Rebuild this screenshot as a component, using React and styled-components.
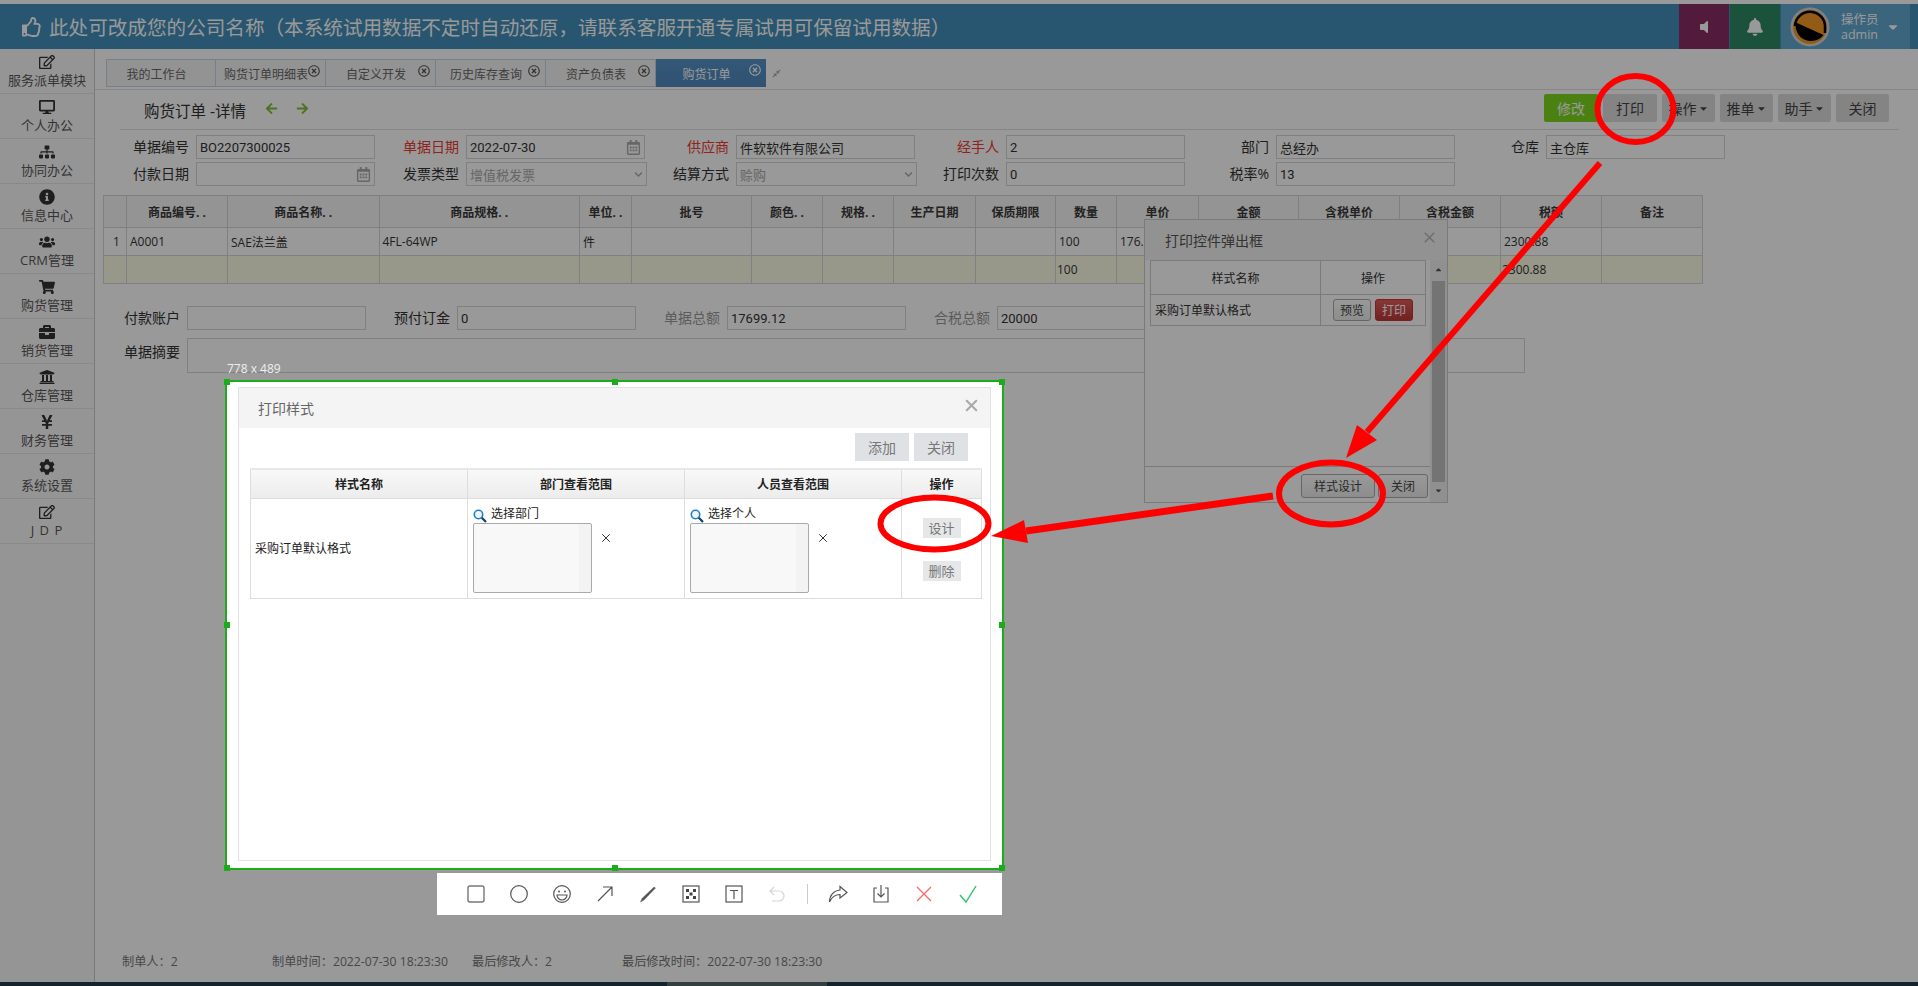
import React from 'react';
import styled, { createGlobalStyle } from 'styled-components';
import { X } from 'lucide-react';
import {
  FaRegThumbsUp, FaVolumeOff, FaBell, FaCaretDown, FaRegEdit, FaDesktop, FaSitemap, FaInfoCircle,
  FaUsers, FaShoppingCart, FaBriefcase, FaUniversity, FaYenSign, FaCog, FaRegTimesCircle,
  FaCompressAlt, FaArrowLeft, FaArrowRight, FaRegCalendarAlt, FaChevronDown, FaCaretUp,
} from 'react-icons/fa';

const Global = createGlobalStyle`
  html, body { margin: 0; padding: 0; background: #fff; }
  body { font-family: "Open Sans", "Noto Sans CJK SC", sans-serif; font-size: 12px; color: #333; }
  * { box-sizing: border-box; }
`;

const Screen = styled.div`
  position: relative;
  width: 1918px;
  height: 986px;
  overflow: hidden;
  background: #fff;
  display: flex;
  flex-direction: column;
`;
const TopStrip = styled.div`height: 4px; background: #fff; flex: none;`;
const Header = styled.header`
  height: 45px;
  flex: none;
  background: #438eb9;
  display: flex;
  color: #fff;
`;
const Brand = styled.div`
  flex: 1;
  display: flex;
  align-items: center;
  padding-left: 22px;
  font-size: 19.6px;
  gap: 7px;
  white-space: nowrap;
`;
const HeadBtn = styled.div`
  width: ${p => p.$w}px;
  margin-right: 1px;
  background: ${p => p.$bg};
  display: flex;
  align-items: center;
  justify-content: center;
  font-size: ${p => p.$size}px;
`;
const UserBox = styled.div`
  width: 129px;
  background: #62a8d1;
  display: flex;
  align-items: center;
  padding-left: 9px;
  margin-right: 8px;
  svg:last-child { margin-left: -1px; }
`;
const UserText = styled.div`
  margin-left: 11px;
  font-size: 12.5px;
  line-height: 15px;
  width: 46px;
  text-align: left;
`;
const Layout = styled.div`flex: 1; display: flex; min-height: 0;`;
const Sidebar = styled.nav`
  width: 95px;
  flex: none;
  background: #f8f8f8;
  border-right: 1px solid #ccc;
`;
const NavItem = styled.div`
  height: 45px;
  border-bottom: 1px solid #e5e5e5;
  display: flex;
  flex-direction: column;
  align-items: center;
  padding-top: 5px;
  color: #585858;
  font-size: 13px;
  line-height: 18px;
  letter-spacing: ${p => (p.$wide ? '1px' : '0')};
  svg { color: #333; font-size: 16px; margin-bottom: 1px; }
`;
const Main = styled.main`flex: 1; display: flex; flex-direction: column; min-width: 0;`;
const TabBar = styled.div`
  height: 41px;
  flex: none;
  padding: 10px 0 0 11px;
  border-bottom: 1px solid #e0e0e0;
  display: flex;
  align-items: flex-start;
`;
const Tab = styled.div`
  position: relative;
  width: 110px;
  height: 28px;
  display: flex;
  align-items: center;
  justify-content: center;
  padding: 2px 9px 0 0;
  font-size: 12px;
  white-space: nowrap;
  color: ${p => (p.$active ? '#fff' : '#666')};
  background: ${p => (p.$active ? 'linear-gradient(#5593c8, #5288c0)' : '#f6f6f6')};
  border: 1px solid #c5d5e8;
  border-left-width: ${p => (p.$first ? '1px' : '0')};
  ${p => p.$active && 'border: none;'}
`;
const TabClose = styled.span`
  position: absolute;
  right: 5px;
  top: 5px;
  font-size: 12px;
  line-height: 12px;
  color: ${p => (p.$active ? '#fff' : '#555')};
`;
const Pin = styled.span`
  margin: 10px 0 0 6px;
  font-size: 9px;
  line-height: 9px;
  color: #aaa;
`;
const TitleBar = styled.div`
  height: 40px;
  flex: none;
  margin: 0 19px 0 25px;
  padding: 4px 10px 0 24px;
  border-bottom: 1px solid #e0e0e0;
  display: flex;
  align-items: flex-start;
`;
const Title = styled.div`
  font-size: 15.5px;
  line-height: 28px;
  padding-top: 3px;
  color: #333;
  flex: 1;
  display: flex;
  align-items: center;
`;
const NavArrow = styled.span`
  color: #7fbf3a;
  font-size: 13px;
  line-height: 13px;
  margin-left: ${p => p.$ml}px;
  margin-bottom: 4px;
`;
const Actions = styled.div`display: flex; gap: 5px;`;
const ActionBtn = styled.div`
  height: 28px;
  width: ${p => p.$w}px;
  border-radius: 2px;
  background: ${p => (p.$green ? '#7dd820' : '#dcdcdc')};
  color: ${p => (p.$green ? '#fff' : '#444')};
  display: flex;
  align-items: center;
  justify-content: center;
  font-size: 14px;
  svg { font-size: 11px; margin-left: 1px; }
`;
const FormGrid = styled.div`
  margin: ${p => p.$top}px 0 0 ${p => p.$left}px;
  display: grid;
  grid-template-columns: repeat(6, 270px);
  row-gap: ${p => p.$gap}px;
`;
const Field = styled.div`
  display: grid;
  grid-template-columns: 63px ${p => p.$inputW || 179}px;
  column-gap: 7px;
  align-items: ${p => (p.$top ? 'start' : 'center')};
  grid-column: span ${p => p.$span || 1};
`;
const labelColor = { red: '#f03b2e', muted: '#999', normal: '#333' };
const Label = styled.label`
  text-align: right;
  font-size: 14px;
  line-height: ${p => p.$lh || 20}px;
  white-space: nowrap;
  color: ${p => labelColor[p.$tone || 'normal']};
`;
const TextBox = styled.div`
  height: ${p => p.$h || 24}px;
  border: 1px solid #d5d5d5;
  background: #fff;
  display: flex;
  align-items: center;
  justify-content: space-between;
  padding: 0 3px 0 3px;
  font-family: Roboto, "Noto Sans CJK SC", sans-serif;
  font-size: 13px;
  color: ${p => (p.$muted ? '#aaa' : '#333')};
  svg { color: #aaa; font-size: ${p => (p.$muted ? 9 : 15)}px; }
`;
const DataTable = styled.table`
  width: 1599px;
  margin: 9px 0 0 8px;
  border-collapse: collapse;
  table-layout: fixed;
  flex: none;
`;
const Th = styled.th`
  height: 32px;
  border: 1px solid #d5d5d5;
  background: #f7f7f7;
  font-size: 12px;
  font-weight: 700;
  color: #393939;
  padding: 0;
  white-space: nowrap;
`;
const Td = styled.td`
  height: 28px;
  border: 1px solid #d5d5d5;
  background: ${p => (p.$total ? '#fdfde6' : '#fff')};
  padding: 0 0 0 ${p => (p.$total ? 1 : 3)}px;
  font-size: 12px;
  text-align: ${p => (p.$center ? 'center' : 'left')};
  white-space: nowrap;
  overflow: hidden;
`;
const Col = styled.col`width: ${p => p.$w}px;`;
const Footer = styled.div`
  margin: auto 0 0 27px;
  padding-bottom: 12px;
  display: flex;
  font-size: 12.2px;
  line-height: 16px;
  color: #777;
`;
const FootItem = styled.span`width: ${p => p.$w}px;`;
const BottomStrip = styled.div`
  height: 4px;
  flex: none;
  background: linear-gradient(90deg, #223c4c 667px, #556a6a 667px, #556a6a 827px, #223c4c 827px);
`;

// 打印控件弹出框 (behind the dim layer)
const PrintPopup = styled.div`
  position: absolute;
  left: 1144px;
  top: 219px;
  width: 304px;
  height: 284px;
  background: #fff;
  border: 1px solid #ccc;
  display: grid;
  grid-template-columns: 1fr 17px;
  grid-template-rows: 40px 1fr;
`;
const PopupLeft = styled.div`display: flex; flex-direction: column;`;
const PopupHead = styled.div`
  grid-column: 1 / -1;
  background: #f3f3f3;
  display: flex;
  align-items: center;
  justify-content: space-between;
  padding: 0 9px 0 20px;
  font-size: 14px;
  color: #555;
  svg { color: #bbb; margin-bottom: 6px; }
`;
const PopupBody = styled.div`flex: 1; padding-left: 5px;`;
const PopupFoot = styled.div`
  height: 36px;
  flex: none;
  border-top: 1px solid #ccc;
  display: flex;
  justify-content: flex-end;
  padding: 7px 2px 0 0;
  gap: 3px;
`;
const SmallTable = styled.table`
  width: 275px;
  border-collapse: collapse;
  table-layout: fixed;
  th, td { border: 1px solid #ccc; font-size: 12px; padding: 0; color: #333; }
  th { height: 34px; font-weight: 400; text-align: center; }
  td { height: 31px; padding-left: 4px; }
`;
const PopBtn = styled.span`
  display: inline-flex;
  width: ${p => p.$w}px;
  height: ${p => p.$h}px;
  align-items: center;
  justify-content: center;
  border: 1px solid ${p => (p.$red ? '#c33' : '#aaa')};
  border-radius: 3px;
  color: ${p => (p.$red ? '#fff' : '#444')};
  background: ${p => (p.$red ? 'linear-gradient(#e35a5a, #bf3838)' : 'linear-gradient(#fff, #ececec)')};
  margin-left: ${p => p.$ml || 0}px;
  font-size: 12px;
`;
const OpsRow = styled.div`display: flex; justify-content: center; padding-right: 4px;`;
const ScrollTrack = styled.div`
  background: #f1f1f1;
  display: flex;
  flex-direction: column;
  align-items: center;
  padding-top: 5px;
  color: #555;
  font-size: 9px;
`;
const ScrollThumb = styled.div`
  width: 13px;
  height: 201px;
  margin: 7px 0 4px;
  background: #c1c1c1;
`;

const Dim = styled.div`position: absolute; inset: 0; background: rgba(0, 0, 0, .4);`;

// bright area of the screenshot tool
const Selection = styled.section`
  position: absolute;
  left: 225px;
  top: 380px;
  width: 779px;
  height: 490px;
  border: 2px solid #1aad19;
  background: #fff;
  padding: 5px 11px 7px;
`;
const SizeTag = styled.span`
  position: absolute;
  left: 0;
  top: -21px;
  color: #eee;
  font-size: 12px;
  line-height: 16px;
`;
const Handle = styled.i`
  position: absolute;
  left: ${p => p.$x}%;
  top: ${p => p.$y}%;
  width: 6px;
  height: 6px;
  margin: -3px 0 0 -3px;
  background: #1aad19;
`;
const Modal = styled.div`
  height: 100%;
  border: 1px solid #e0e3e6;
  display: flex;
  flex-direction: column;
`;
const ModalHead = styled.div`
  position: relative;
  height: 40px;
  flex: none;
  background: #f4f4f4;
  display: flex;
  align-items: center;
  padding-left: 19px;
  font-size: 14px;
  color: #666;
`;
const ModalClose = styled.span`
  position: absolute;
  right: 9px;
  top: 8px;
  color: #aaa;
  line-height: 0;
`;
const ModalBody = styled.div`padding: 5px 9px 0 11px;`;
const ModalBtns = styled.div`
  display: flex;
  justify-content: flex-end;
  gap: 5px;
  padding-right: 13px;
  margin-bottom: 7px;
`;
const GrayBtn = styled.span`
  display: inline-flex;
  width: 54px;
  height: 28px;
  align-items: center;
  justify-content: center;
  background: #dfe2e5;
  color: #777;
  font-size: 14px;
`;
const StyleTable = styled.table`
  width: 731px;
  border-collapse: collapse;
  table-layout: fixed;
  border-top: 2px solid #e8e8e8;
  th, td { border: 1px solid #ddd; padding: 0; font-size: 12px; color: #222; }
  th { height: 29px; font-weight: 700; background: linear-gradient(#f8f8f8, #ececec); text-align: center; }
  td { height: 100px; vertical-align: top; }
`;
const NameCell = styled.td`
  && { vertical-align: middle; padding-left: 4px; }
`;
const Scope = styled.div`padding: 8px 0 0 5px;`;
const PickLine = styled.div`
  display: flex;
  height: 16px;
  align-items: flex-start;
  gap: 4px;
  font-size: 12px;
  line-height: 14px;
  svg { margin-top: 2px; }
`;
const ScopeRow = styled.div`display: flex; align-items: flex-start;`;
const ScopeBox = styled.div`
  width: 119px;
  height: 70px;
  border: 1px solid #aaa;
  border-radius: 2px;
  background: linear-gradient(to left, #f3f3f3 12px, #f8f8f8 12px);
`;
const Remove = styled.span`
  margin: 8px 0 0 7px;
  line-height: 0;
  color: #333;
`;
const OpCell = styled.div`
  display: flex;
  flex-direction: column;
  align-items: center;
  gap: 23px;
  padding-top: 19px;
`;
const OpBtn = styled.span`
  display: inline-flex;
  width: 38px;
  height: 20px;
  align-items: center;
  justify-content: center;
  background: #e5e7e9;
  color: #777;
  font-size: 13px;
`;
const Tools = styled.div`
  position: absolute;
  left: 437px;
  top: 873px;
  width: 565px;
  height: 42px;
  background: #fff;
  display: flex;
  align-items: center;
  padding-left: 17px;
`;
const ToolSlot = styled.span`
  width: ${p => p.$w || 43.1}px;
  height: 22px;
  flex: none;
  display: flex;
  align-items: center;
  justify-content: center;
`;
const ToolSep = styled.span`width: 1px; height: 20px; background: #ccc;`;
const Marks = styled.svg`position: absolute; left: 0; top: 0; pointer-events: none;`;

const Avatar = () => (
  <svg width="40" height="40" viewBox="0 0 40 40">
    <circle cx="20" cy="20" r="19.5" fill="#d8d8d8" />
    <circle cx="20" cy="20" r="17" fill="#f59a24" />
    <path d="M5 19A15 15 0 0 1 35 20.5" fill="none" stroke="#000" strokeWidth="2.5" />
    <path d="M6 15.5 L33.5 28 A15.5 15.5 0 0 1 6 15.5Z" fill="#000" />
    <path d="M35 20 L35 26" stroke="#000" strokeWidth="2.5" />
  </svg>
);

const Lens = () => (
  <svg width="14" height="14" viewBox="0 0 14 14">
    <circle cx="5.5" cy="5.5" r="4.2" fill="#eef6fb" stroke="#1f7fc0" strokeWidth="1.6" />
    <path d="M8.8 8.8 L13 13" stroke="#123f63" strokeWidth="2.2" />
  </svg>
);

const Tool = ({ children, stroke = '#555', width = 1.2 }) => (
  <ToolSlot>
    <svg width="20" height="20" viewBox="0 0 20 20" fill="none" stroke={stroke} strokeWidth={width}>{children}</svg>
  </ToolSlot>
);

const navItems = [
  [FaRegEdit, '服务派单模块'], [FaDesktop, '个人办公'], [FaSitemap, '协同办公'], [FaInfoCircle, '信息中心'],
  [FaUsers, 'CRM管理'], [FaShoppingCart, '购货管理'], [FaBriefcase, '销货管理'], [FaUniversity, '仓库管理'],
  [FaYenSign, '财务管理'], [FaCog, '系统设置'], [FaRegEdit, 'J D P', true],
];
const tabs = ['我的工作台', '购货订单明细表', '自定义开发', '历史库存查询', '资产负债表', '购货订单'];
const colWidths = [23, 101, 151.5, 200.5, 52, 120, 71, 71, 82, 80, 61, 82, 100, 101, 101, 101, 101];
const heads = ['', '商品编号. .', '商品名称. .', '商品规格. .', '单位. .', '批号', '颜色. .', '规格. .', '生产日期', '保质期限', '数量', '单价', '金额', '含税单价', '含税金额', '税额', '备注'];
const row1 = ['1', 'A0001', 'SAE法兰盖', '4FL-64WP', '件', '', '', '', '', '', '100', '176.', '', '', '', '2300.88', ''];
const row2 = ['', '', '', '', '', '', '', '', '', '', '100', '', '', '', '', '2300.88', ''];
const handles = [[0, 0], [50, 0], [100, 0], [0, 50], [100, 50], [0, 100], [50, 100], [100, 100]];

const App = () => (
  <Screen>
    <Global />
    <TopStrip />
    <Header>
      <Brand>
        <FaRegThumbsUp size={20} />
        此处可改成您的公司名称（本系统试用数据不定时自动还原，请联系客服开通专属试用可保留试用数据）
      </Brand>
      <HeadBtn $w={50} $bg="#892e65" $size={16}><FaVolumeOff /></HeadBtn>
      <HeadBtn $w={50} $bg="#2e8965" $size={18}><FaBell /></HeadBtn>
      <UserBox>
        <Avatar />
        <UserText>操作员<br />admin</UserText>
        <FaCaretDown size={14} />
      </UserBox>
    </Header>
    <Layout>
      <Sidebar>
        {navItems.map(([Icon, text, wide]) => (
          <NavItem key={text} $wide={wide}><Icon />{text}</NavItem>
        ))}
      </Sidebar>
      <Main>
        <TabBar>
          {tabs.map((t, i) => (
            <Tab key={t} $first={i === 0} $active={i === 5}>
              {t}
              {i > 0 && <TabClose $active={i === 5}><FaRegTimesCircle /></TabClose>}
            </Tab>
          ))}
          <Pin><FaCompressAlt /></Pin>
        </TabBar>
        <TitleBar>
          <Title>
            购货订单 -详情
            <NavArrow $ml={19}><FaArrowLeft /></NavArrow>
            <NavArrow $ml={18}><FaArrowRight /></NavArrow>
          </Title>
          <Actions>
            <ActionBtn $w={54} $green>修改</ActionBtn>
            <ActionBtn $w={54}>打印</ActionBtn>
            <ActionBtn $w={53}>操作<FaCaretDown /></ActionBtn>
            <ActionBtn $w={53}>推单<FaCaretDown /></ActionBtn>
            <ActionBtn $w={53}>助手<FaCaretDown /></ActionBtn>
            <ActionBtn $w={53}>关闭</ActionBtn>
          </Actions>
        </TitleBar>
        <FormGrid $top={5} $left={31} $gap={3}>
          <Field><Label>单据编号</Label><TextBox>BO2207300025</TextBox></Field>
          <Field><Label $tone="red">单据日期</Label><TextBox>2022-07-30<FaRegCalendarAlt /></TextBox></Field>
          <Field><Label $tone="red">供应商</Label><TextBox>件软软件有限公司</TextBox></Field>
          <Field><Label $tone="red">经手人</Label><TextBox>2</TextBox></Field>
          <Field><Label>部门</Label><TextBox>总经办</TextBox></Field>
          <Field><Label>仓库</Label><TextBox>主仓库</TextBox></Field>
          <Field><Label>付款日期</Label><TextBox><span /><FaRegCalendarAlt /></TextBox></Field>
          <Field $inputW={181}><Label>发票类型</Label><TextBox $muted>增值税发票<FaChevronDown /></TextBox></Field>
          <Field $inputW={181}><Label>结算方式</Label><TextBox $muted>赊购<FaChevronDown /></TextBox></Field>
          <Field><Label>打印次数</Label><TextBox>0</TextBox></Field>
          <Field><Label>税率%</Label><TextBox>13</TextBox></Field>
        </FormGrid>
        <DataTable>
          <colgroup>{colWidths.map((w, i) => <Col key={i} $w={w} />)}</colgroup>
          <thead><tr>{heads.map((h, i) => <Th key={i}>{h}</Th>)}</tr></thead>
          <tbody>
            <tr>{row1.map((c, i) => <Td key={i} $center={i === 0}>{c}</Td>)}</tr>
            <tr>{row2.map((c, i) => <Td key={i} $total>{c}</Td>)}</tr>
          </tbody>
        </DataTable>
        <FormGrid $top={22} $left={22} $gap={8}>
          <Field><Label>付款账户</Label><TextBox /></Field>
          <Field><Label>预付订金</Label><TextBox>0</TextBox></Field>
          <Field><Label $tone="muted">单据总额</Label><TextBox>17699.12</TextBox></Field>
          <Field><Label $tone="muted">合税总额</Label><TextBox>20000</TextBox></Field>
          <Field $span={6} $inputW={1338} $top><Label $lh={28}>单据摘要</Label><TextBox $h={35} /></Field>
        </FormGrid>
        <Footer>
          <FootItem $w={150}>制单人：2</FootItem>
          <FootItem $w={200}>制单时间：2022-07-30 18:23:30</FootItem>
          <FootItem $w={150}>最后修改人：2</FootItem>
          <FootItem>最后修改时间：2022-07-30 18:23:30</FootItem>
        </Footer>
      </Main>
    </Layout>
    <BottomStrip />

    <PrintPopup>
      <PopupHead>打印控件弹出框<X size={17} strokeWidth={2.4} /></PopupHead>
      <PopupLeft>
        <PopupBody>
          <SmallTable>
            <colgroup><Col $w={170} /><Col $w={105} /></colgroup>
            <thead><tr><th>样式名称</th><th>操作</th></tr></thead>
            <tbody>
              <tr>
                <td>采购订单默认格式</td>
                <td><OpsRow><PopBtn $w={38} $h={22}>预览</PopBtn><PopBtn $w={38} $h={22} $ml={4} $red>打印</PopBtn></OpsRow></td>
              </tr>
            </tbody>
          </SmallTable>
        </PopupBody>
        <PopupFoot>
          <PopBtn $w={74} $h={24}>样式设计</PopBtn>
          <PopBtn $w={50} $h={24}>关闭</PopBtn>
        </PopupFoot>
      </PopupLeft>
      <ScrollTrack>
        <FaCaretUp />
        <ScrollThumb />
        <FaCaretDown />
      </ScrollTrack>
    </PrintPopup>

    <Dim />

    <Selection>
      <SizeTag>778 x 489</SizeTag>
      {handles.map(([x, y]) => <Handle key={`${x}-${y}`} $x={x} $y={y} />)}
      <Modal>
        <ModalHead>
          打印样式
          <ModalClose><X size={19} strokeWidth={2.6} /></ModalClose>
        </ModalHead>
        <ModalBody>
          <ModalBtns><GrayBtn>添加</GrayBtn><GrayBtn>关闭</GrayBtn></ModalBtns>
          <StyleTable>
            <colgroup><Col $w={217} /><Col $w={217} /><Col $w={217} /><Col $w={80} /></colgroup>
            <thead><tr><th>样式名称</th><th>部门查看范围</th><th>人员查看范围</th><th>操作</th></tr></thead>
            <tbody>
              <tr>
                <NameCell>采购订单默认格式</NameCell>
                <td>
                  <Scope>
                    <PickLine><Lens />选择部门</PickLine>
                    <ScopeRow><ScopeBox /><Remove><X size={14} strokeWidth={1.7} /></Remove></ScopeRow>
                  </Scope>
                </td>
                <td>
                  <Scope>
                    <PickLine><Lens />选择个人</PickLine>
                    <ScopeRow><ScopeBox /><Remove><X size={14} strokeWidth={1.7} /></Remove></ScopeRow>
                  </Scope>
                </td>
                <td><OpCell><OpBtn>设计</OpBtn><OpBtn>删除</OpBtn></OpCell></td>
              </tr>
            </tbody>
          </StyleTable>
        </ModalBody>
      </Modal>
    </Selection>

    <Tools>
      <Tool stroke="#777" width={1.4}><rect x="2" y="2" width="16" height="16" rx="2" /></Tool>
      <Tool><circle cx="10" cy="10" r="8.3" /></Tool>
      <Tool>
        <circle cx="10" cy="10" r="8.3" />
        <circle cx="7" cy="7.5" r="1" fill="#555" stroke="none" />
        <circle cx="13" cy="7.5" r="1" fill="#555" stroke="none" />
        <path d="M5 11h10a5 5 0 0 1-10 0Z" />
      </Tool>
      <Tool><path d="M3 17 L17 3 M8 3 H17 V12" /></Tool>
      <Tool width={0.4}><path d="M2.5 18 L4 14.5 L16 3 L17.5 4 L6 16 Z" fill="#555" /></Tool>
      <Tool>
        <rect x="2" y="2" width="16" height="16" />
        <path d="M5 5h3v3H5zM12 5h3v3h-3zM8.5 8.5h3v3h-3zM5 12h3v3H5zM12 12h3v3h-3z" fill="#444" stroke="none" />
      </Tool>
      <Tool><rect x="2" y="2" width="16" height="16" /><path d="M6 6.5H14M10 6.5V15" /></Tool>
      <Tool stroke="#d5d5d5"><path d="M7 3 L3 7 L7 11 M3 7 H12 A5 5 0 0 1 12 17 H5" /></Tool>
      <ToolSlot $w={18}><ToolSep /></ToolSlot>
      <Tool><path d="M12 2.5 L19 8.5 L12 14 V10.5 C7.5 10.5 4 12.5 1.5 18 C1.5 11 6 6.5 12 6 Z" /></Tool>
      <Tool><path d="M6 4 H3 V18 H17 V4 H14 M10 1 V13 M6.5 9.5 L10 13 L13.5 9.5" /></Tool>
      <Tool stroke="#f56c6c" width={1.4}><path d="M3 3 L17 17 M17 3 L3 17" /></Tool>
      <Tool stroke="#2dc26b" width={1.4}><path d="M2 11 L8 18 L18 2" /></Tool>
    </Tools>

    <Marks width="1918" height="986" viewBox="0 0 1918 986">
      <g fill="none" stroke="#fe0000" strokeWidth="6">
        <ellipse cx="1635.5" cy="109" rx="38" ry="33" />
        <ellipse cx="1331" cy="493.5" rx="52" ry="31" />
        <ellipse cx="934.5" cy="523.5" rx="54" ry="26" />
        <path d="M1600 163 L1367 432" />
        <path d="M1273 496 L1026 531" strokeWidth="7" />
      </g>
      <g fill="#fe0000">
        <path d="M1346 458 L1357 425 L1377 440 Z" />
        <path d="M991 536 L1024 520 L1028 543 Z" />
      </g>
    </Marks>
  </Screen>
);

export default App;
